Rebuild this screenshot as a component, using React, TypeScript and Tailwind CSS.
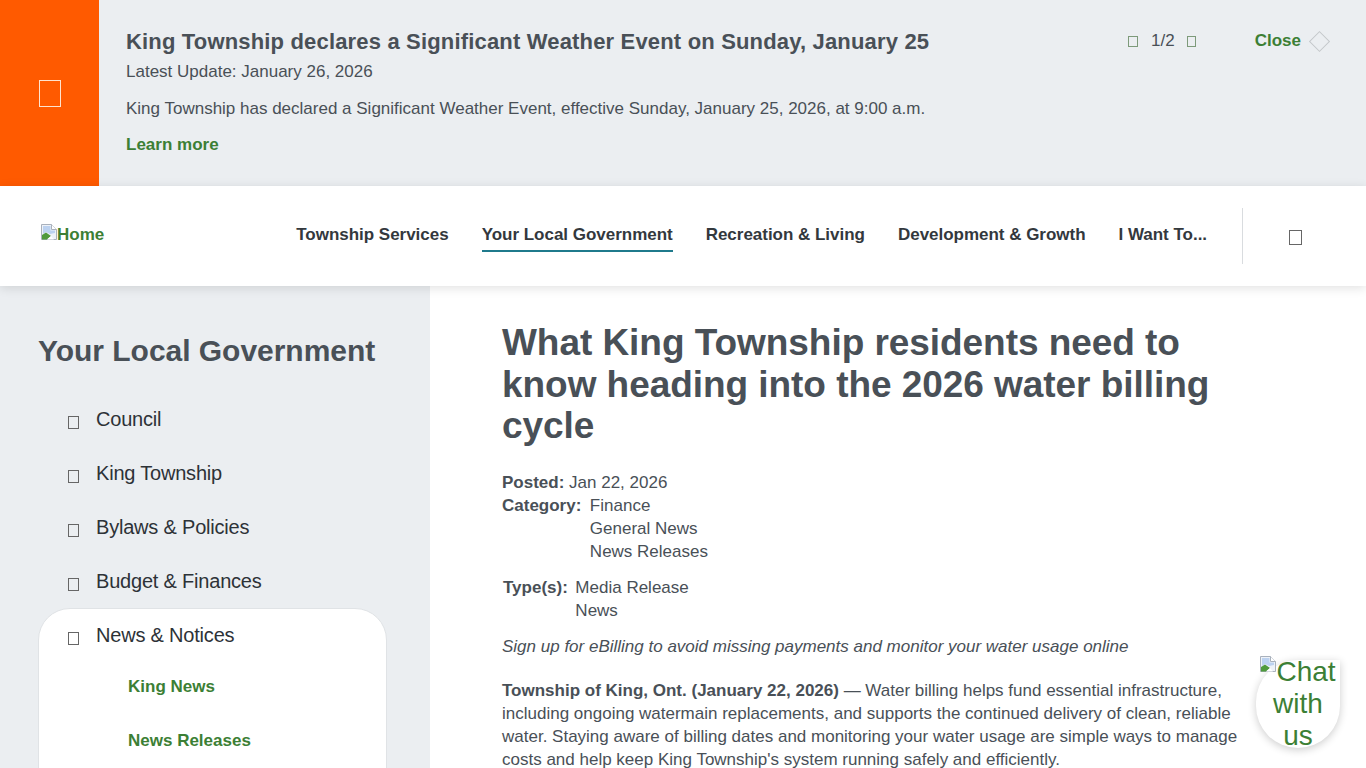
function Tofu({ className }: { className: string }) {
  return <span className={`block shrink-0 border ${className}`} />;
}

function BrokenImage() {
  return (
    <svg width="16" height="16" viewBox="0 0 16 16" className="block shrink-0">
      <path d="M0.5 0.5H10.5L15.5 5.5V15.5H0.5Z" fill="#eef2f8" stroke="#a9b1bc" />
      <path d="M10.5 0.5V5.5H15.5" fill="#ffffff" stroke="#a9b1bc" />
      <path d="M2 2H9.5V6.5H14V9L9 10L5 8L2 10Z" fill="#bcd2f0" />
      <path d="M1 15.5V11L5 8.5L10 12L6 15.5Z" fill="#4f9a3c" />
      <path d="M6 15.5L10 12L13 15.5Z" fill="#ffffff" />
    </svg>
  );
}

const navItems = ['Township Services', 'Your Local Government', 'Recreation & Living', 'Development & Growth', 'I Want To...'];
const sideItems = ['Council', 'King Township', 'Bylaws & Policies', 'Budget & Finances'];

function SideRow({ label }: { label: string }) {
  return (
    <div className="flex h-[54px] items-center pl-[30px]">
      <Tofu className="mt-[7px] h-[13px] w-[11px] border-[#666]" />
      <span className="ml-[17px] text-[20px] tracking-[-0.2px] text-[#2d3237]">{label}</span>
    </div>
  );
}

export default function App() {
  return (
    <div className="relative h-screen overflow-hidden bg-white font-['Liberation_Sans',Arial,sans-serif] text-[#495057]">
      {/* Alert banner */}
      <div className="flex h-[186px] bg-[#ebeef1]">
        <div className="flex w-[99px] shrink-0 items-center justify-center bg-[#ff5a00]">
          <Tofu className="h-[27px] w-[22px] border-[#ffe3cf]" />
        </div>
        <div className="flex-1 pl-[27px] pt-[27px]">
          <h2 className="text-[22px] leading-[30px] font-bold tracking-[0.17px] text-[#495057]">
            King Township declares a Significant Weather Event on Sunday, January 25
          </h2>
          <p className="mt-[3px] text-[17px] leading-[24px]">Latest Update: January 26, 2026</p>
          <p className="mt-[13px] text-[17px] leading-[24px]">
            King Township has declared a Significant Weather Event, effective Sunday, January 25, 2026, at 9:00 a.m.
          </p>
          <a className="mt-[12px] block text-[17px] leading-[24px] font-bold text-[#3c7f35]">Learn more</a>
        </div>
        <div className="flex h-[82px] items-center pr-[39px]">
          <Tofu className="h-[11px] w-[10px] border-[#7d9a7a]" />
          <span className="ml-[13px] text-[17px]">1/2</span>
          <Tofu className="ml-[12px] h-[11px] w-[9px] border-[#7d9a7a]" />
          <span className="ml-[59px] text-[17px] font-bold text-[#3c7f35]">Close</span>
          <span className="ml-[11px] block h-[15px] w-[15px] rotate-45 border border-[#c4c7ca]" />
        </div>
      </div>

      {/* Main nav */}
      <header className="relative z-10 flex h-[100px] items-center bg-white pl-[41px] shadow-[0_2px_10px_rgba(0,0,0,0.12)]">
        <a className="mb-[8px] flex h-[16px] items-start text-[17px] leading-[20px] font-bold text-[#3c7f35]">
          <BrokenImage />
          <span className="mt-[1px]">Home</span>
        </a>
        <nav className="ml-[192px] flex gap-[33px]">
          {navItems.map((item, i) => (
            <a
              key={item}
              className={`block pb-[3px] pt-[3px] text-[17px] leading-[24px] font-bold tracking-[-0.02px] text-[#33383d] ${
                i === 1 ? 'border-b-2 border-[#1f7a8c]' : 'border-b-2 border-transparent'
              }`}
            >
              {item}
            </a>
          ))}
        </nav>
        <div className="ml-[35px] h-[56px] w-[1px] bg-[#d9dcdf]" />
        <Tofu className="ml-[46px] mt-[2px] h-[15px] w-[13px] border-[#666]" />
      </header>

      <div className="flex h-[482px]">
        {/* Side menu */}
        <aside className="w-[430px] shrink-0 bg-[#ebeef1] pl-[38px] pt-[46px]">
          <h2 className="text-[30px] leading-[38px] font-bold tracking-[-0.03px] text-[#495057]">Your Local Government</h2>
          <div className="mt-[22px] w-[349px]">
            {sideItems.map((s) => (
              <SideRow key={s} label={s} />
            ))}
            <div className="h-[200px] rounded-t-[32px] border border-[#e0e3e6] bg-white">
              <div className="-ml-[1px] -mt-[1px]">
                <SideRow label="News & Notices" />
              </div>
              <a className="-mt-[2px] block pl-[89px] text-[17px] leading-[54px] font-bold text-[#3c7f35]">King News</a>
              <a className="block pl-[89px] text-[17px] leading-[54px] font-bold text-[#3c7f35]">News Releases</a>
            </div>
          </div>
        </aside>

        {/* Article */}
        <main className="flex-1 pl-[72px] pr-[126px] pt-[36px] text-[17px] leading-[23px]">
          <h1 className="text-[37px] leading-[41.7px] font-bold tracking-[-0.05px] text-[#495057]">
            What King Township residents need to know heading into the 2026 water billing cycle
          </h1>
          <p className="mt-[24px]">
            <b>Posted:</b> Jan 22, 2026
          </p>
          <div className="flex">
            <b>Category:</b>
            <div className="ml-[8.5px]">
              <div>Finance</div>
              <div>General News</div>
              <div>News Releases</div>
            </div>
          </div>
          <div className="mt-[13px] flex pl-[1px]">
            <b>Type(s):</b>
            <div className="ml-[7.5px]">
              <div>Media Release</div>
              <div>News</div>
            </div>
          </div>
          <p className="mt-[13px] italic">Sign up for eBilling to avoid missing payments and monitor your water usage online</p>
          <p className="mt-[21px]">
            <b>Township of King, Ont. (January 22, 2026)</b> — Water billing helps fund essential infrastructure,
            including ongoing watermain replacements, and supports the continued delivery of clean, reliable water.
            Staying aware of billing dates and monitoring your water usage are simple ways to manage costs and help
            keep King Township's system running safely and efficiently.
          </p>
        </main>
      </div>

      {/* Chat bubble */}
      <div className="absolute left-[1256px] top-[660px] z-20 h-[88px] w-[84px] rounded-b-full rounded-tl-full bg-white text-center text-[28px] leading-[32px] text-[#3c7f35] shadow-[0_2px_8px_rgba(0,0,0,0.2)]">
        <div className="-mt-[4px] ml-[-2px] w-[88px]">
          <span className="inline-block h-[16px] w-[16px] align-top">
            <BrokenImage />
          </span>
          Chat
          <br />
          with
          <br />
          us
        </div>
      </div>
    </div>
  );
}
